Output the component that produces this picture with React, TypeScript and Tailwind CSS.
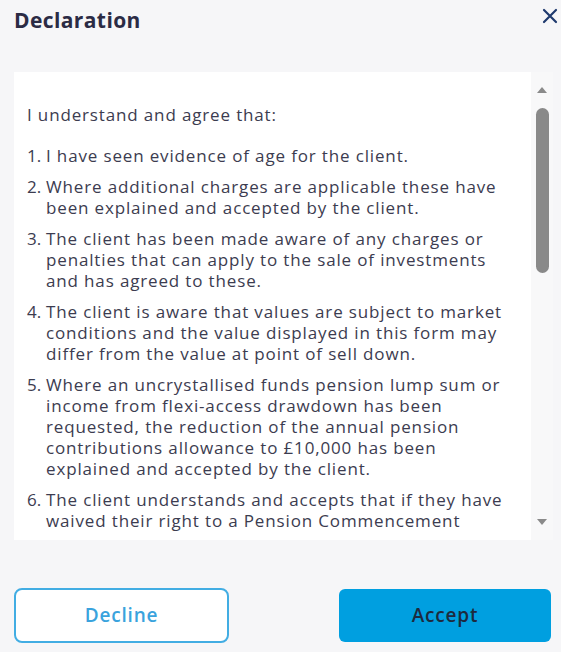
import React from 'react'

const items: string[][] = [
  ['I have seen evidence of age for the client.'],
  ['Where additional charges are applicable these have', 'been explained and accepted by the client.'],
  [
    'The client has been made aware of any charges or',
    'penalties that can apply to the sale of investments',
    'and has agreed to these.',
  ],
  [
    'The client is aware that values are subject to market',
    'conditions and the value displayed in this form may',
    'differ from the value at point of sell down.',
  ],
  [
    'Where an uncrystallised funds pension lump sum or',
    'income from flexi-access drawdown has been',
    'requested, the reduction of the annual pension',
    'contributions allowance to £10,000 has been',
    'explained and accepted by the client.',
  ],
  [
    'The client understands and accepts that if they have',
    'waived their right to a Pension Commencement',
  ],
]

const App: React.FC = () => {
  return (
    <div className="w-[561px] h-[652px] bg-[#f6f6f8] flex flex-col font-['Open_Sans',sans-serif] overflow-hidden">
      {/* Header */}
      <div className="flex items-start justify-between pl-[14px] pr-[3px] pt-[6px] h-[72px]">
        <h2 className="text-[21px] font-bold text-[#2b2b45] leading-[28px] tracking-[0.4px]">Declaration</h2>
        <svg width="16" height="16" viewBox="0 0 16 16" className="mt-[2px]">
          <path d="M2 2 L14 14 M14 2 L2 14" stroke="#1f3a6e" strokeWidth="2.2" strokeLinecap="round" />
        </svg>
      </div>

      {/* Scroll panel */}
      <div className="ml-[14px] mr-[8px] h-[468px] bg-white flex overflow-hidden">
        <div className="flex-1 pl-[13px] pt-[32px] text-[17px] leading-[21px] tracking-[0.85px] text-[#3c3c50] overflow-hidden">
          <p className="mb-[20px]">I understand and agree that:</p>
          <ol className="flex flex-col gap-[10px]">
            {items.map((lines, i) => (
              <li key={i} className="flex">
                <span className="w-[19px] shrink-0 tracking-normal">{i + 1}.</span>
                <span className="flex flex-col whitespace-nowrap">
                  {lines.map((l, j) => (
                    <span key={j}>{l}</span>
                  ))}
                </span>
              </li>
            ))}
          </ol>
        </div>
        <div className="w-[22px] bg-[#f8f8f9] flex flex-col items-center pt-[14px] pb-[14px]">
          <svg width="12" height="8" viewBox="0 0 12 8">
            <path d="M6 1 L11 7 L1 7 Z" fill="#8a8a8a" />
          </svg>
          <div className="mt-[14px] w-[13px] h-[165px] rounded-full bg-[#898989]" />
          <div className="flex-1" />
          <svg width="12" height="8" viewBox="0 0 12 8">
            <path d="M1 1 L11 1 L6 7 Z" fill="#8a8a8a" />
          </svg>
        </div>
      </div>

      {/* Buttons */}
      <div className="flex justify-between pl-[14px] pr-[10px] pt-[48px]">
        <button className="w-[215px] h-[55px] rounded-[8px] border-2 border-[#42ade3] bg-white text-[#3aa3dd] text-[19px] font-semibold tracking-[0.8px]">
          Decline
        </button>
        <button className="w-[212px] h-[53px] mt-[1px] rounded-[6px] bg-[#009fe0] text-[#1d2a3e] text-[19px] font-semibold tracking-[0.8px]">
          Accept
        </button>
      </div>
    </div>
  )
}

export default App
